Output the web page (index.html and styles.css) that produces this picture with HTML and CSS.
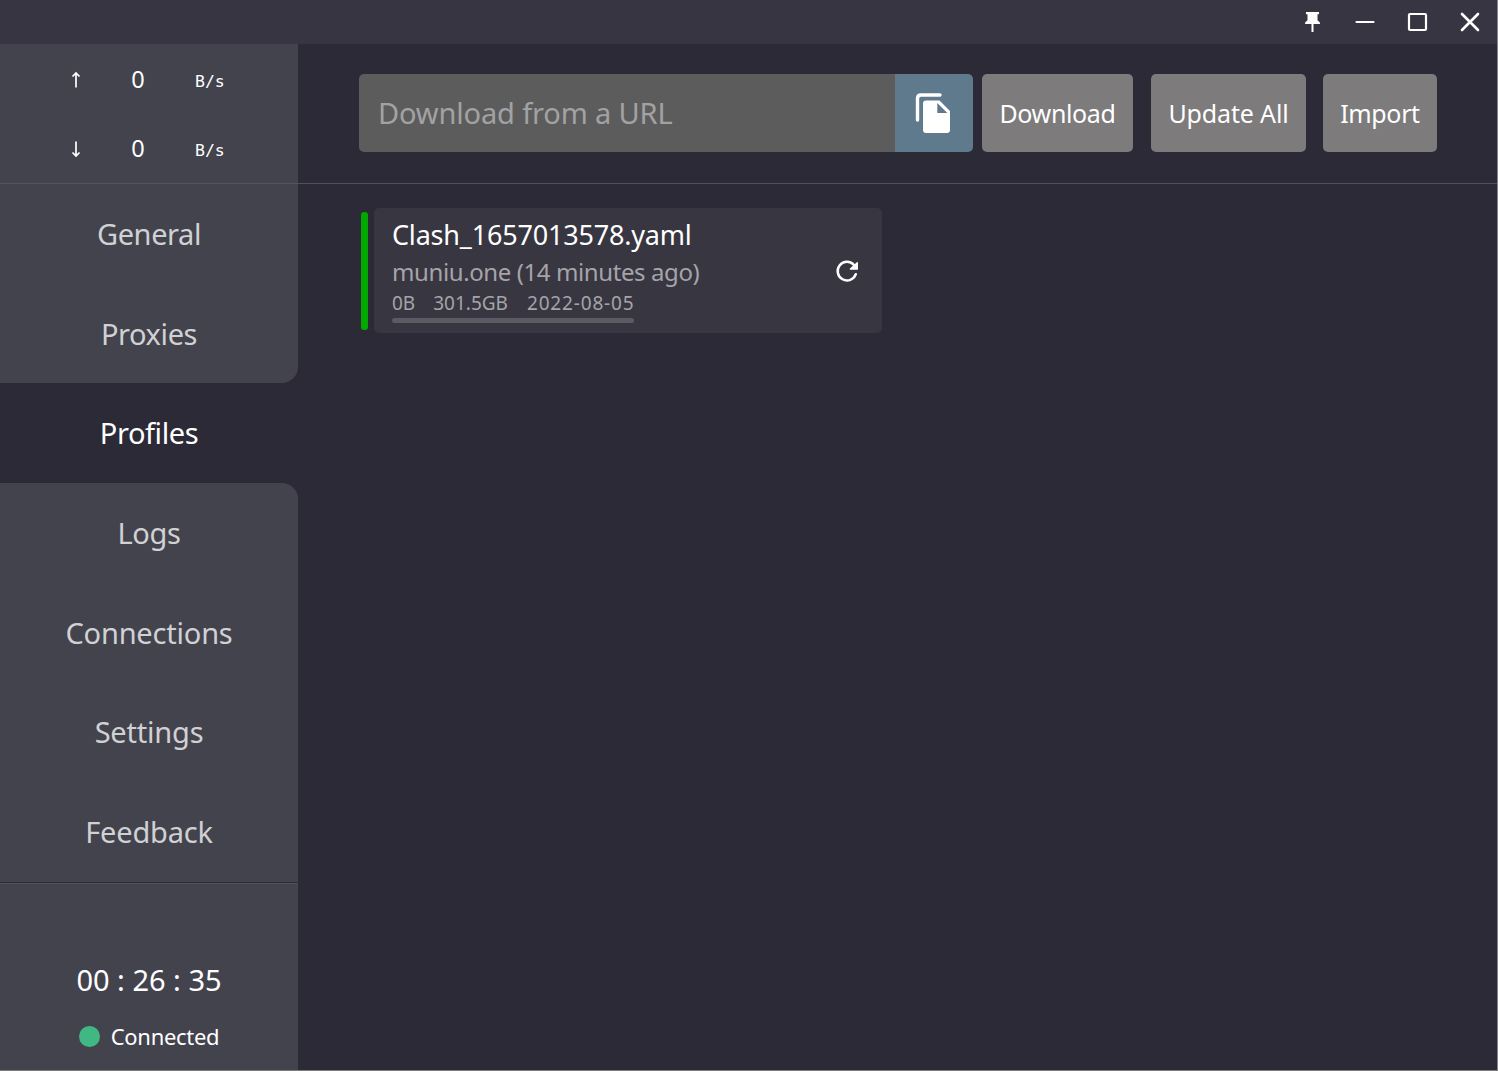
FILE: index.html
```html
<!DOCTYPE html>
<html lang="en">
<head>
<meta charset="utf-8">
<title>Profiles</title>
<link rel="stylesheet" href="styles.css">
</head>
<body>
<div class="window">
  <header class="titlebar">
    <svg class="ctl" viewBox="0 0 24 24"><path d="M5 2H18V4.300H16.500V10.200L18.900 12.600V14H12.500V22H10.500V14H4.100V12.600L6.500 10.200V4.300H5Z" fill="#fff"/></svg>
    <svg class="ctl" viewBox="0 0 24 24"><path d="M3.500 12H20.500" stroke="#fff" stroke-width="2.200" stroke-linecap="round"/></svg>
    <svg class="ctl" viewBox="0 0 24 24"><rect x="3" y="4" width="17" height="16" rx="1" fill="none" stroke="#fff" stroke-width="2.200"/></svg>
    <svg class="ctl" viewBox="0 0 24 24"><path d="M4 4L20 20M20 4L4 20" stroke="#fff" stroke-width="2.600" stroke-linecap="round"/></svg>
  </header>
  <div class="body">
    <aside class="sidebar">
      <div class="traffic">
        <div class="rate"><svg class="arrow" viewBox="0 0 10 18"><path d="M5 16.500V2M1.500 5.500L5 2L8.500 5.500" fill="none" stroke="#fff" stroke-width="1.700"/></svg><span class="num">0</span><span class="unit">B/s</span></div>
        <div class="rate"><svg class="arrow" viewBox="0 0 10 18"><path d="M5 1.500V16M1.500 12.500L5 16L8.500 12.500" fill="none" stroke="#fff" stroke-width="1.700"/></svg><span class="num">0</span><span class="unit">B/s</span></div>
      </div>
      <nav class="menu">
        <a class="item">General</a>
        <a class="item before">Proxies</a>
        <a class="item active">Profiles</a>
        <a class="item after">Logs</a>
        <a class="item wide">Connections</a>
        <a class="item wide">Settings</a>
        <a class="item wide">Feedback</a>
      </nav>
      <div class="status">
        <div class="timer">00 : 26 : 35</div>
        <div class="conn"><i class="dot"></i><span>Connected</span></div>
      </div>
    </aside>
    <main class="main">
      <div class="toolbar">
        <div class="url">Download from a URL</div>
        <div class="paste"><svg viewBox="0 0 78 78"><path d="M22.500 46V24.500Q22.500 21 26 21H45" fill="none" stroke="#fff" stroke-width="3.400" stroke-linecap="round"/><path fill-rule="evenodd" d="M31 26.500H44.500L55 37V56Q55 59 52 59H31Q28 59 28 56V29.500Q28 26.500 31 26.500ZM42.300 29.100V39.100H52.300Z" fill="#fff"/></svg></div>
        <div class="btn download">Download</div>
        <div class="btn update">Update All</div>
        <div class="btn import">Import</div>
      </div>
      <div class="list">
        <div class="mark"></div>
        <div class="card">
          <div class="info">
            <div class="name">Clash_1657013578.yaml</div>
            <div class="source">muniu.one (14 minutes ago)</div>
            <div class="usage"><span>0B</span><span>301.5GB</span><span class="date">2022-08-05</span></div>
            <div class="bar"></div>
          </div>
          <svg class="refresh" viewBox="0 0 24 24"><path d="M20.800 15.200A9.300 9.300 0 1 1 19 6" fill="none" stroke="#fff" stroke-width="2.500" stroke-linecap="round"/><path d="M22.300 3.800V10H15.400Z" fill="#fff" stroke="#fff" stroke-width="1.400" stroke-linejoin="round"/></svg>
        </div>
      </div>
    </main>
  </div>
</div>
</body>
</html>
```
FILE: styles.css
```css
* { box-sizing: border-box; }
body { margin: 0; background: #2c2a37; font-family: "Noto Sans", "Open Sans", sans-serif; color: #fff; }
.window { width: 1498px; height: 1071px; display: flex; flex-direction: column; border-right: 1px solid #85858a; border-bottom: 1px solid #7c7c78; overflow: hidden; }
.titlebar { height: 44px; flex: none; background: #363541; display: flex; justify-content: flex-end; align-items: center; gap: 28.500px; padding-right: 15px; }
.ctl { width: 24px; height: 24px; }
.body { flex: 1; min-height: 0; display: flex; }
.sidebar { width: 298px; flex: none; display: flex; flex-direction: column; }
.traffic { height: 140px; background: #43434e; border-bottom: 1px solid #54545d; padding-top: 1px; }
.rate { height: 69px; display: flex; align-items: center; padding-left: 71px; }
.arrow { width: 10px; height: 18px; }
.num { width: 14px; margin-left: 50px; padding-bottom: 2px; font-size: 23.500px; text-align: center; }
.unit { margin-left: 50px; margin-top: 3px; font-family: "DejaVu Sans Mono", monospace; font-size: 16.500px; }
.menu { height: 698px; display: grid; grid-template-rows: repeat(7, 1fr); }
.item { display: flex; align-items: center; justify-content: center; background: #43434e; color: #d1d1d4; font-size: 29px; letter-spacing: -.4px; padding-bottom: 1px; }
.wide { letter-spacing: -.2px; }
.active { background: #2c2a37; color: #fff; }
.before { border-bottom-right-radius: 16px; }
.after { border-top-right-radius: 16px; padding-bottom: 0; }
.status { flex: 1; background: #43434e; border-top: 1px solid #2d2c38; box-shadow: inset 0 1px #51515b; display: flex; flex-direction: column; align-items: center; padding-top: 74px; }
.timer { font-size: 29px; line-height: 46px; }
.conn { display: flex; align-items: center; gap: 11px; margin-top: 16px; font-size: 22px; line-height: 34px; letter-spacing: -.3px; }
.dot { width: 21px; height: 21px; border-radius: 50%; background: #41b883; }
.conn span { padding-bottom: 1px; }
.main { flex: 1; min-width: 0; }
.toolbar { height: 140px; border-bottom: 1px solid #51505b; padding: 30px 0 0 61px; display: flex; align-items: flex-start; }
.url { width: 536px; height: 78px; background: #5c5c5d; border-radius: 5px 0 0 5px; color: #a2a2a4; font-size: 29px; letter-spacing: -.15px; display: flex; align-items: center; padding: 0 0 2px 19px; }
.paste { width: 78px; height: 78px; background: #5f7a8c; border-radius: 0 5px 5px 0; }
.paste svg { display: block; }
.btn { height: 78px; background: #7d7b7c; border-radius: 5px; font-size: 25px; letter-spacing: -.35px; display: flex; align-items: center; justify-content: center; white-space: nowrap; padding-bottom: 1px; }
.download { width: 151px; margin-left: 9px; }
.update { width: 155px; margin-left: 18px; letter-spacing: -.15px; }
.import { width: 114px; margin-left: 17px; }
.list { display: flex; padding: 24px 0 0 63px; }
.mark { width: 7px; height: 118px; margin-top: 4px; border-radius: 3px; background: #00a800; }
.card { width: 508px; height: 125px; margin-left: 6px; border-radius: 5px; background: #383641; display: flex; align-items: center; justify-content: space-between; padding: 0 23px 0 18px; }
.info { height: 125px; padding-top: 8px; }
.name { font-size: 27px; line-height: 38px; letter-spacing: -.19px; }
.source { font-size: 24px; line-height: 36px; letter-spacing: -.4px; color: #a5a4a9; }
.usage { display: flex; gap: 18px; font-size: 19px; line-height: 26px; color: #a5a4a9; }
.date { letter-spacing: .83px; padding-left: 1px; }
.bar { width: 242px; height: 5px; margin-top: 2px; border-radius: 3px; background: #5c5b63; }
.refresh { width: 24px; height: 24px; }
```
